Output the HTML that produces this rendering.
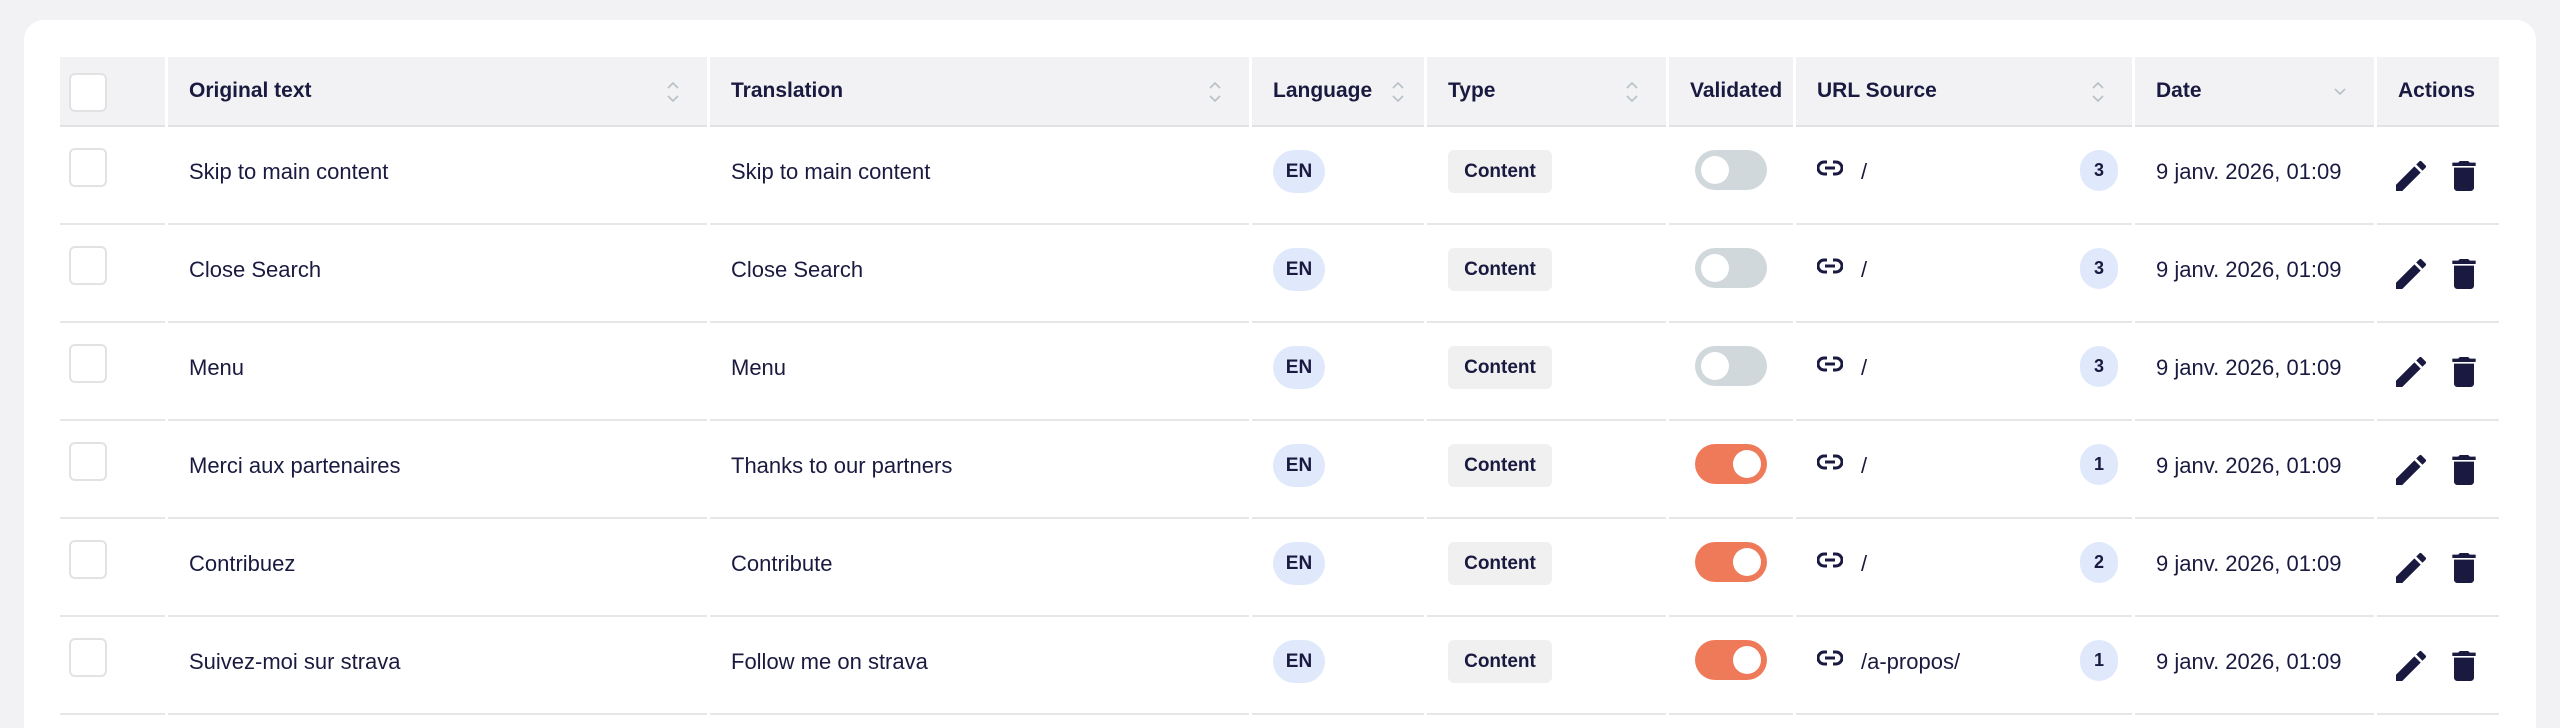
<!DOCTYPE html>
<html><head><meta charset="utf-8"><style>
*{box-sizing:border-box;margin:0;padding:0}
html,body{width:2560px;height:728px;overflow:hidden}
body{background:#f2f2f4;font-family:"Liberation Sans",sans-serif;color:#1a1a40;position:relative}
.card{position:absolute;left:24px;top:20px;width:2512px;height:708px;background:#fff;border-radius:20px 20px 0 0}
table{position:absolute;left:57px;top:57px;border-collapse:separate;border-spacing:3px 0;table-layout:fixed;width:2445px}
th{background:#f2f2f4;height:70px;border-bottom:2px solid #e2e2e4;text-align:left;font-weight:bold;font-size:21px;padding:0 0 0 21px;position:relative;white-space:nowrap}
td{height:98px;border-bottom:2px solid #e6e6e6;vertical-align:top;padding:23px 0 0 21px;font-size:22px;position:relative;white-space:nowrap}
.t{line-height:43px;display:block}
.cb{position:absolute;left:9px;width:38px;height:39px;border:2px solid #e2e2e4;border-radius:6px;background:#fff}
th .cb{top:16px}td .cb{top:21px}
.sort{position:absolute;right:28px;top:24px;width:12px;height:22px}
.en{display:inline-block;width:52px;height:43px;border-radius:22px;background:#dfe9fb;font-weight:bold;font-size:19px;text-align:center;line-height:43px}
.ct{display:inline-block;width:104px;height:43px;border-radius:6px;background:#f0f0f0;font-weight:bold;font-size:19px;text-align:center;line-height:43px}
.tg{position:absolute;left:26px;top:23px;width:72px;height:40px;border-radius:20px;background:#d0d8dc}
.tg::after{content:"";position:absolute;left:6px;top:6px;width:28px;height:28px;border-radius:50%;background:#fff}
.tg.on{background:#ee7a5a}.tg.on::after{left:38px}
.lk{position:absolute;left:21px;top:33px}
.url{position:absolute;left:65px;top:23px;line-height:43px}
.num{position:absolute;left:284px;top:23px;width:38px;height:41px;border-radius:20px;background:#dfe9fb;font-weight:bold;font-size:18px;text-align:center;line-height:41px}
.ic{position:absolute;top:29px}
</style></head><body>
<div class="card"></div>
<table>
<colgroup><col style="width:105px"><col style="width:539px"><col style="width:539px"><col style="width:172px"><col style="width:239px"><col style="width:124px"><col style="width:336px"><col style="width:239px"><col style="width:122px"></colgroup>
<tr>
<th><span class="cb"></span></th>
<th>Original text<svg class="sort" viewBox="0 0 12 22"><path d="M1 7l5-5 5 5M1 15l5 5 5-5" fill="none" stroke="#b7c0c6" stroke-width="1.6"/></svg></th>
<th>Translation<svg class="sort" viewBox="0 0 12 22"><path d="M1 7l5-5 5 5M1 15l5 5 5-5" fill="none" stroke="#b7c0c6" stroke-width="1.6"/></svg></th>
<th>Language<svg class="sort" style="right:20px" viewBox="0 0 12 22"><path d="M1 7l5-5 5 5M1 15l5 5 5-5" fill="none" stroke="#b7c0c6" stroke-width="1.6"/></svg></th>
<th>Type<svg class="sort" viewBox="0 0 12 22"><path d="M1 7l5-5 5 5M1 15l5 5 5-5" fill="none" stroke="#b7c0c6" stroke-width="1.6"/></svg></th>
<th>Validated</th>
<th>URL Source<svg class="sort" viewBox="0 0 12 22"><path d="M1 7l5-5 5 5M1 15l5 5 5-5" fill="none" stroke="#b7c0c6" stroke-width="1.6"/></svg></th>
<th>Date<svg class="sort" viewBox="0 0 12 22"><path d="M1 8l5 5 5-5" fill="none" stroke="#b7c0c6" stroke-width="1.6"/></svg></th>
<th>Actions</th>
</tr>
<tr><td><span class="cb"></span></td><td><span class="t">Skip to main content</span></td><td><span class="t">Skip to main content</span></td><td><span class="en">EN</span></td><td><span class="ct">Content</span></td><td><span class="tg"></span></td><td><svg class="lk" width="26" height="16" viewBox="0 0 26 16"><path d="M10 2H7a6 6 0 0 0 0 12h3M16 2h3a6 6 0 0 1 0 12h-3M8 8h10" fill="none" stroke="#1a1a40" stroke-width="3"/></svg><span class="url">/</span><span class="num">3</span></td><td><span class="t">9 janv. 2026, 01:09</span></td><td><svg class="ic" style="left:14px" width="40" height="40" viewBox="0 0 24 24"><path fill="#1a1a40" d="M3 17.25V21h3.75L17.81 9.94l-3.75-3.75L3 17.25zM20.71 7.04a1 1 0 0 0 0-1.41l-2.34-2.34a1 1 0 0 0-1.41 0l-1.83 1.83 3.75 3.75 1.83-1.83z"/></svg><svg class="ic" style="left:67px" width="40" height="40" viewBox="0 0 24 24"><path fill="#1a1a40" d="M6 19c0 1.1.9 2 2 2h8c1.1 0 2-.9 2-2V7H6v12zM19 4h-3.5l-1-1h-5l-1 1H5v2h14V4z"/></svg></td></tr>
<tr><td><span class="cb"></span></td><td><span class="t">Close Search</span></td><td><span class="t">Close Search</span></td><td><span class="en">EN</span></td><td><span class="ct">Content</span></td><td><span class="tg"></span></td><td><svg class="lk" width="26" height="16" viewBox="0 0 26 16"><path d="M10 2H7a6 6 0 0 0 0 12h3M16 2h3a6 6 0 0 1 0 12h-3M8 8h10" fill="none" stroke="#1a1a40" stroke-width="3"/></svg><span class="url">/</span><span class="num">3</span></td><td><span class="t">9 janv. 2026, 01:09</span></td><td><svg class="ic" style="left:14px" width="40" height="40" viewBox="0 0 24 24"><path fill="#1a1a40" d="M3 17.25V21h3.75L17.81 9.94l-3.75-3.75L3 17.25zM20.71 7.04a1 1 0 0 0 0-1.41l-2.34-2.34a1 1 0 0 0-1.41 0l-1.83 1.83 3.75 3.75 1.83-1.83z"/></svg><svg class="ic" style="left:67px" width="40" height="40" viewBox="0 0 24 24"><path fill="#1a1a40" d="M6 19c0 1.1.9 2 2 2h8c1.1 0 2-.9 2-2V7H6v12zM19 4h-3.5l-1-1h-5l-1 1H5v2h14V4z"/></svg></td></tr>
<tr><td><span class="cb"></span></td><td><span class="t">Menu</span></td><td><span class="t">Menu</span></td><td><span class="en">EN</span></td><td><span class="ct">Content</span></td><td><span class="tg"></span></td><td><svg class="lk" width="26" height="16" viewBox="0 0 26 16"><path d="M10 2H7a6 6 0 0 0 0 12h3M16 2h3a6 6 0 0 1 0 12h-3M8 8h10" fill="none" stroke="#1a1a40" stroke-width="3"/></svg><span class="url">/</span><span class="num">3</span></td><td><span class="t">9 janv. 2026, 01:09</span></td><td><svg class="ic" style="left:14px" width="40" height="40" viewBox="0 0 24 24"><path fill="#1a1a40" d="M3 17.25V21h3.75L17.81 9.94l-3.75-3.75L3 17.25zM20.71 7.04a1 1 0 0 0 0-1.41l-2.34-2.34a1 1 0 0 0-1.41 0l-1.83 1.83 3.75 3.75 1.83-1.83z"/></svg><svg class="ic" style="left:67px" width="40" height="40" viewBox="0 0 24 24"><path fill="#1a1a40" d="M6 19c0 1.1.9 2 2 2h8c1.1 0 2-.9 2-2V7H6v12zM19 4h-3.5l-1-1h-5l-1 1H5v2h14V4z"/></svg></td></tr>
<tr><td><span class="cb"></span></td><td><span class="t">Merci aux partenaires</span></td><td><span class="t">Thanks to our partners</span></td><td><span class="en">EN</span></td><td><span class="ct">Content</span></td><td><span class="tg on"></span></td><td><svg class="lk" width="26" height="16" viewBox="0 0 26 16"><path d="M10 2H7a6 6 0 0 0 0 12h3M16 2h3a6 6 0 0 1 0 12h-3M8 8h10" fill="none" stroke="#1a1a40" stroke-width="3"/></svg><span class="url">/</span><span class="num">1</span></td><td><span class="t">9 janv. 2026, 01:09</span></td><td><svg class="ic" style="left:14px" width="40" height="40" viewBox="0 0 24 24"><path fill="#1a1a40" d="M3 17.25V21h3.75L17.81 9.94l-3.75-3.75L3 17.25zM20.71 7.04a1 1 0 0 0 0-1.41l-2.34-2.34a1 1 0 0 0-1.41 0l-1.83 1.83 3.75 3.75 1.83-1.83z"/></svg><svg class="ic" style="left:67px" width="40" height="40" viewBox="0 0 24 24"><path fill="#1a1a40" d="M6 19c0 1.1.9 2 2 2h8c1.1 0 2-.9 2-2V7H6v12zM19 4h-3.5l-1-1h-5l-1 1H5v2h14V4z"/></svg></td></tr>
<tr><td><span class="cb"></span></td><td><span class="t">Contribuez</span></td><td><span class="t">Contribute</span></td><td><span class="en">EN</span></td><td><span class="ct">Content</span></td><td><span class="tg on"></span></td><td><svg class="lk" width="26" height="16" viewBox="0 0 26 16"><path d="M10 2H7a6 6 0 0 0 0 12h3M16 2h3a6 6 0 0 1 0 12h-3M8 8h10" fill="none" stroke="#1a1a40" stroke-width="3"/></svg><span class="url">/</span><span class="num">2</span></td><td><span class="t">9 janv. 2026, 01:09</span></td><td><svg class="ic" style="left:14px" width="40" height="40" viewBox="0 0 24 24"><path fill="#1a1a40" d="M3 17.25V21h3.75L17.81 9.94l-3.75-3.75L3 17.25zM20.71 7.04a1 1 0 0 0 0-1.41l-2.34-2.34a1 1 0 0 0-1.41 0l-1.83 1.83 3.75 3.75 1.83-1.83z"/></svg><svg class="ic" style="left:67px" width="40" height="40" viewBox="0 0 24 24"><path fill="#1a1a40" d="M6 19c0 1.1.9 2 2 2h8c1.1 0 2-.9 2-2V7H6v12zM19 4h-3.5l-1-1h-5l-1 1H5v2h14V4z"/></svg></td></tr>
<tr><td><span class="cb"></span></td><td><span class="t">Suivez-moi sur strava</span></td><td><span class="t">Follow me on strava</span></td><td><span class="en">EN</span></td><td><span class="ct">Content</span></td><td><span class="tg on"></span></td><td><svg class="lk" width="26" height="16" viewBox="0 0 26 16"><path d="M10 2H7a6 6 0 0 0 0 12h3M16 2h3a6 6 0 0 1 0 12h-3M8 8h10" fill="none" stroke="#1a1a40" stroke-width="3"/></svg><span class="url">/a-propos/</span><span class="num">1</span></td><td><span class="t">9 janv. 2026, 01:09</span></td><td><svg class="ic" style="left:14px" width="40" height="40" viewBox="0 0 24 24"><path fill="#1a1a40" d="M3 17.25V21h3.75L17.81 9.94l-3.75-3.75L3 17.25zM20.71 7.04a1 1 0 0 0 0-1.41l-2.34-2.34a1 1 0 0 0-1.41 0l-1.83 1.83 3.75 3.75 1.83-1.83z"/></svg><svg class="ic" style="left:67px" width="40" height="40" viewBox="0 0 24 24"><path fill="#1a1a40" d="M6 19c0 1.1.9 2 2 2h8c1.1 0 2-.9 2-2V7H6v12zM19 4h-3.5l-1-1h-5l-1 1H5v2h14V4z"/></svg></td></tr>
</table>
</body></html>
